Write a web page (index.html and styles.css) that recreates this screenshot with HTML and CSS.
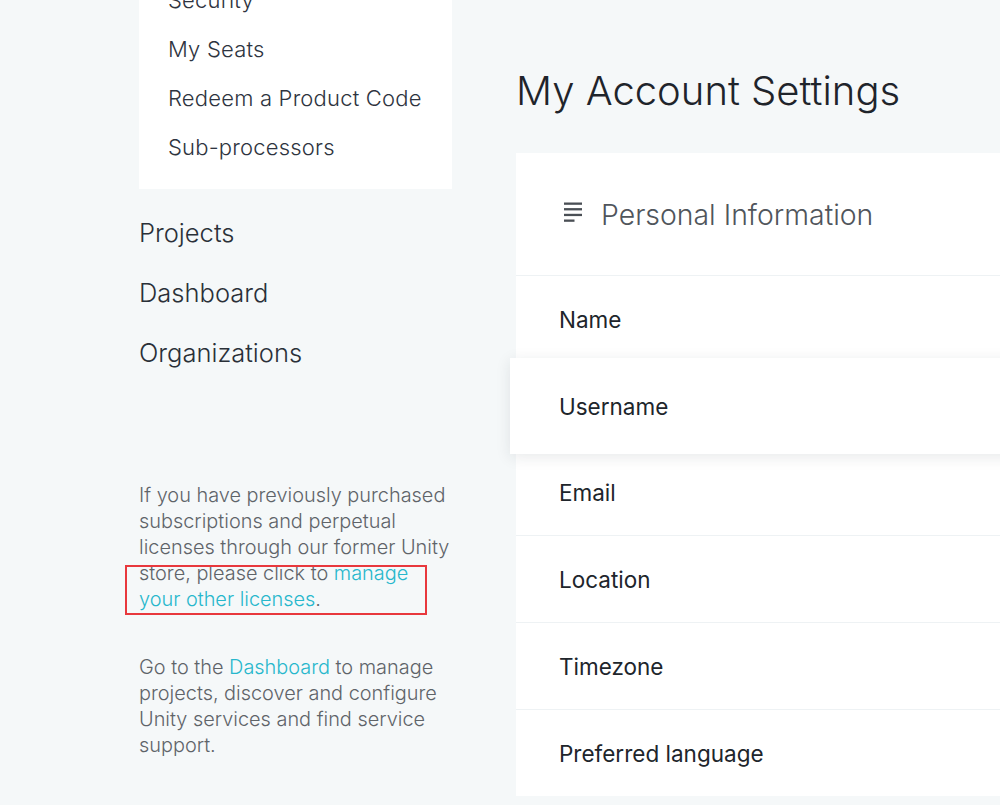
FILE: index.html
```html
<!DOCTYPE html>
<html lang="en">
<head>
<meta charset="utf-8">
<title>My Account Settings</title>
<link rel="stylesheet" href="styles.css">
</head>
<body>
<div class="page">
  <aside class="sidebar">
    <nav class="subnav">
      <a class="subnav-item" href="#">Security</a>
      <a class="subnav-item" href="#">My Seats</a>
      <a class="subnav-item" href="#">Redeem a Product Code</a>
      <a class="subnav-item" href="#">Sub-processors</a>
    </nav>
    <nav class="mainnav">
      <a class="mainnav-item" href="#">Projects</a>
      <a class="mainnav-item" href="#">Dashboard</a>
      <a class="mainnav-item" href="#">Organizations</a>
    </nav>
    <div class="note first">
      <p>If you have previously purchased subscriptions and perpetual licenses through our former Unity store, please click to <a class="link" href="#">manage your other licenses</a>.</p>
      <span class="highlight"></span>
    </div>
    <div class="note">
      <p>Go to the <a class="link" href="#">Dashboard</a> to manage projects, discover and configure Unity services and find service support.</p>
    </div>
  </aside>
  <main class="main">
    <h1 class="title">My Account Settings</h1>
    <section class="card">
      <header class="card-header">
        <svg class="card-icon" width="18" height="20" viewBox="0 0 18 20" aria-hidden="true">
          <rect x="0" y="0.5" width="18" height="2.3" fill="#4a4f55"/>
          <rect x="0" y="6.1" width="18" height="2.3" fill="#4a4f55"/>
          <rect x="0" y="11.8" width="18" height="2.3" fill="#4a4f55"/>
          <rect x="0" y="17.5" width="10.5" height="2.3" fill="#4a4f55"/>
        </svg>
        <h2 class="card-title">Personal Information</h2>
      </header>
      <div class="row">Name</div>
      <div class="row raised">Username</div>
      <div class="row">Email</div>
      <div class="row">Location</div>
      <div class="row">Timezone</div>
      <div class="row last">Preferred language</div>
    </section>
  </main>
</div>
</body>
</html>
```

FILE: styles.css
```css
html, body {
  margin: 0;
  padding: 0;
}
body {
  background: #f5f8f9;
  font-family: Inter, "Noto Sans", "Liberation Sans", sans-serif;
  color: #2a3038;
  width: 1000px;
  height: 805px;
  overflow: hidden;
}
a {
  text-decoration: none;
  color: inherit;
}
.page {
  display: flex;
  padding-left: 139px;
  gap: 64px;
}
.sidebar {
  width: 313px;
  flex: none;
}
.subnav {
  background: #ffffff;
  display: flex;
  flex-direction: column;
  margin-top: -42px;
  padding: 18px 0 17px;
}
.subnav-item {
  display: block;
  padding: 10px 29px;
  line-height: 29px;
  font-size: 22px;
  letter-spacing: 0.2px;
  font-weight: 300;
  color: #2e3440;
  white-space: nowrap;
}
.mainnav {
  display: flex;
  flex-direction: column;
  margin-top: 14px;
}
.mainnav-item {
  display: block;
  line-height: 60px;
  font-size: 25.5px;
  font-weight: 300;
  color: #2a3038;
}
.note {
  position: relative;
}
.note.first {
  margin-top: 99px;
}
.note + .note {
  margin-top: 42px;
}
.note p {
  margin: 0;
  font-size: 19.9px;
  line-height: 26px;
  font-weight: 300;
  color: #5f6469;
}
.link {
  color: #27b7cc;
}
.highlight {
  position: absolute;
  left: -14px;
  top: 83px;
  width: 298px;
  height: 46px;
  border: 2px solid #e8383d;
}
.main {
  flex: none;
  width: 560px;
  padding-top: 67px;
}
.title {
  margin: 0 0 38px;
  font-size: 40px;
  line-height: 48px;
  font-weight: 300;
  color: #1f242b;
}
.card {
  background: #ffffff;
  width: 600px;
}
.card-header {
  display: flex;
  align-items: center;
  gap: 19px;
  height: 122px;
  padding-left: 48px;
  border-bottom: 1px solid #eef2f4;
}
.card-icon {
  flex: none;
  margin-top: -5px;
}
.card-title {
  margin: 0;
  font-size: 28.4px;
  font-weight: 300;
  color: #50555b;
}
.row {
  height: 86px;
  display: flex;
  align-items: center;
  padding-left: 43px;
  border-bottom: 1px solid #eef2f4;
  font-size: 22.5px;
  font-weight: 400;
  color: #20252b;
  background: #ffffff;
}
.row.raised {
  position: relative;
  z-index: 1;
  height: 96px;
  margin: -5px -6px -5px -6px;
  padding-left: 49px;
  border-bottom: none;
  box-shadow: 0 3px 14px rgba(30, 40, 50, 0.10);
}
.row.last {
  border-bottom: none;
}
```
